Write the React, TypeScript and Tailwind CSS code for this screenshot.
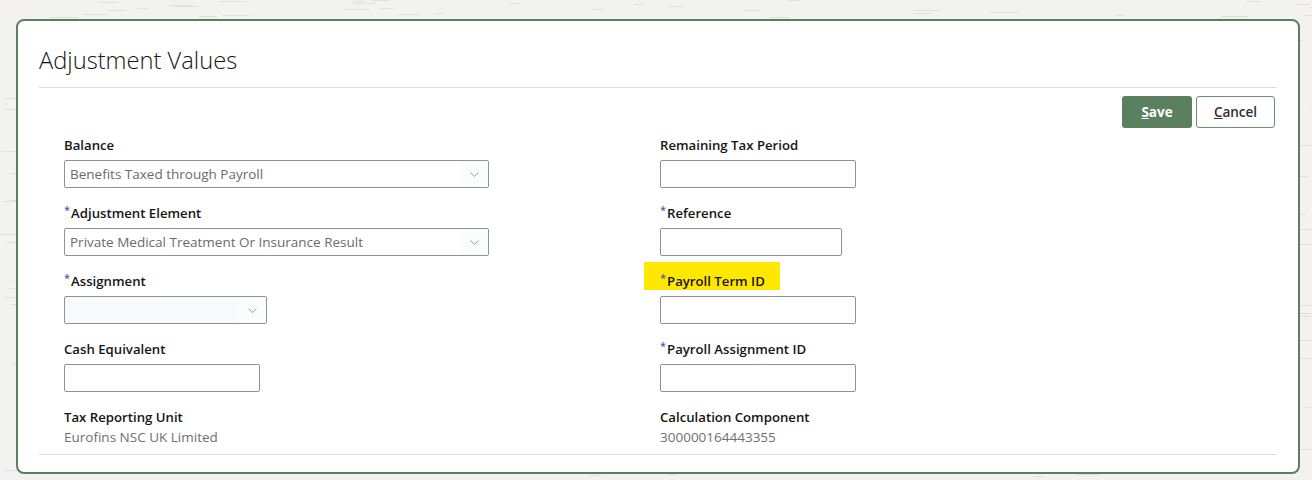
import React from "react";

const FONT = "font-['Segoe_UI','Open_Sans','Noto_Sans',sans-serif]";

function Texture() {
    // scattered short dashes of the page backdrop
    const dashes: [number, number, number][] = [];
    let seed = 7;
    const rnd = () => {
        seed = (seed * 9301 + 49297) % 233280;
        return seed / 233280;
    };
    for (let i = 0; i < 620; i++) {
        dashes.push([Math.round(rnd() * 1312), Math.round(rnd() * 480), 8 + Math.round(rnd() * 22)]);
    }
    return (
        <svg className="absolute inset-0" width="1312" height="480" aria-hidden>
            {dashes.map(([x, y, w], i) => (
                <line key={i} x1={x} y1={y + 0.5} x2={x + w} y2={y + 0.5} stroke="#e2e0dc" strokeWidth="1" />
            ))}
        </svg>
    );
}

function Chevron() {
    return (
        <svg width="9" height="5" viewBox="0 0 9 5" className="shrink-0">
            <path d="M0.5 0.5 L4.5 4.5 L8.5 0.5" fill="none" stroke="#9a9da1" strokeWidth="1" />
        </svg>
    );
}

function Label({ text, required, highlight }: { text: string; required?: boolean; highlight?: boolean }) {
    return (
        <div className="relative h-5 leading-5 text-[13.2px] font-semibold text-[#161513] w-fit">
            {highlight && <span className="absolute left-[-16px] right-[-15px] top-[-9px] h-[28px] bg-[#ffe800]" />}
            <span className="relative">
                {required && <span className="text-[#4a63a8] text-[11px] align-top leading-none mr-[1px] relative top-[1px]">*</span>}
                {text}
            </span>
        </div>
    );
}

function Select({ value, width, tinted }: { value?: string; width: string; tinted?: boolean }) {
    return (
        <div
            className={`mt-[5px] h-[28px] ${width} border border-[#8f9399] rounded-[2px] flex items-center ${tinted ? "bg-[#f8fafd]" : "bg-white"}`}
        >
            <span className="flex-1 px-[5px] text-[13.5px] text-[#6b6b6b] truncate">{value}</span>
            <span className="w-[28px] h-full flex items-center justify-center bg-[#fbfcfd]">
                <Chevron />
            </span>
        </div>
    );
}

function Input({ width }: { width: string }) {
    return <div className={`mt-[5px] h-[28px] ${width} border border-[#8f9399] rounded-[2px] bg-white`} />;
}

function Field({ children }: { children: React.ReactNode }) {
    return <div className="h-[68px]">{children}</div>;
}

export default function App() {
    return (
        <div className={`relative w-full h-[480px] overflow-hidden bg-[#f3f2f0] ${FONT}`}>
            <Texture />
            <div className="relative pt-[19px] pl-[16px] pr-[12px]">
                <div className="h-[455px] bg-white border-2 border-[#5b8060] rounded-[8px] pl-[21px] pr-[21px]">
                    {/* Header */}
                    <div className="h-[67px] pt-[23px] border-b border-[#dedede]">
                        <h1 className="text-[23.7px] leading-[32px] font-light text-[#161513]">Adjustment Values</h1>
                    </div>

                    {/* Toolbar */}
                    <div className="flex justify-end gap-[4px] pt-[8px] pr-[2px]">
                        <button className="h-[32px] w-[70px] rounded-[3px] bg-[#5a8060] text-white text-[13.5px] font-bold">
                            <span className="underline">S</span>ave
                        </button>
                        <button className="h-[32px] w-[79px] rounded-[3px] border border-[#6c8f70] bg-white text-[#2f2f2f] text-[13.5px] font-semibold">
                            <span className="underline">C</span>ancel
                        </button>
                    </div>

                    {/* Form */}
                    <div className="grid grid-cols-[596px_1fr] pl-[25px] pt-[7px]">
                        <div>
                            <Field>
                                <Label text="Balance" />
                                <Select value="Benefits Taxed through Payroll" width="w-[425px]" />
                            </Field>
                            <Field>
                                <Label text="Adjustment Element" required />
                                <Select value="Private Medical Treatment Or Insurance Result" width="w-[425px]" />
                            </Field>
                            <Field>
                                <Label text="Assignment" required />
                                <Select width="w-[203px]" tinted />
                            </Field>
                            <Field>
                                <Label text="Cash Equivalent" />
                                <Input width="w-[196px]" />
                            </Field>
                            <div>
                                <Label text="Tax Reporting Unit" />
                                <div className="h-5 leading-5 text-[13.5px] text-[#6f6f6f]">Eurofins NSC UK Limited</div>
                            </div>
                        </div>
                        <div>
                            <Field>
                                <Label text="Remaining Tax Period" />
                                <Input width="w-[196px]" />
                            </Field>
                            <Field>
                                <Label text="Reference" required />
                                <Input width="w-[182px]" />
                            </Field>
                            <Field>
                                <Label text="Payroll Term ID" required highlight />
                                <Input width="w-[196px]" />
                            </Field>
                            <Field>
                                <Label text="Payroll Assignment ID" required />
                                <Input width="w-[196px]" />
                            </Field>
                            <div>
                                <Label text="Calculation Component" />
                                <div className="h-5 leading-5 text-[13.5px] text-[#6f6f6f]">300000164443355</div>
                            </div>
                        </div>
                    </div>
                    <div className="mt-[7px] border-b border-[#dedede]" />
                </div>
            </div>
        </div>
    );
}
